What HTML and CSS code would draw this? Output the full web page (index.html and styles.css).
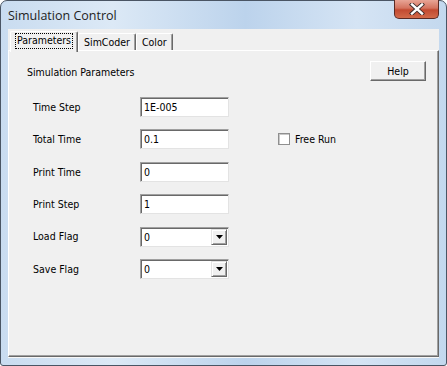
FILE: index.html
```html
<!DOCTYPE html>
<html lang="en">
<head>
  <meta charset="UTF-8">
  <title>Simulation Control</title>
  <link rel="stylesheet" href="styles.css">
</head>
<body>
  <div class="window">
    <!-- Title bar -->
    <div class="titlebar">
      <span class="title">Simulation Control</span>
      <div class="close">
        <svg width="16" height="12" viewBox="0 0 16 12">
          <path d="M3 1.5 L13 10.5 M13 1.5 L3 10.5" stroke="#3a2a2a" stroke-width="4.2" stroke-linecap="square"/>
          <path d="M3 1.5 L13 10.5 M13 1.5 L3 10.5" stroke="#ffffff" stroke-width="2.4" stroke-linecap="square"/>
        </svg>
      </div>
    </div>
    <!-- Client area -->
    <div class="client">
      <div class="tabs">
        <div class="tab active"><span class="focus">Parameters</span></div>
        <div class="tab">SimCoder</div>
        <div class="tab">Color</div>
      </div>
      <div class="panel">
        <div class="panel-head">
          <span>Simulation Parameters</span>
          <div class="button">Help</div>
        </div>
        <div class="form grid">
          <label>Time Step</label>
          <div class="edit">1E-005</div>
          <div></div>

          <label>Total Time</label>
          <div class="edit">0.1</div>
          <div class="check"><span class="box"></span>Free Run</div>

          <label>Print Time</label>
          <div class="edit">0</div>
          <div></div>

          <label>Print Step</label>
          <div class="edit">1</div>
          <div></div>

          <label>Load Flag</label>
          <div class="edit combo">0<span class="drop"><svg width="7" height="4" viewBox="0 0 7 4"><path d="M0 0 H7 L3.5 4 Z" fill="#000"/></svg></span></div>
          <div></div>

          <label>Save Flag</label>
          <div class="edit combo">0<span class="drop"><svg width="7" height="4" viewBox="0 0 7 4"><path d="M0 0 H7 L3.5 4 Z" fill="#000"/></svg></span></div>
          <div></div>
        </div>
      </div>
    </div>
  </div>
</body>
</html>
```
FILE: styles.css
```css
html {
  font: 10.5px/1.0 "DejaVu Sans Condensed", "DejaVu Sans", sans-serif;
}
body {
  margin: 0;
  padding: 0;
  background: #ffffff;
}
.window {
  width: 447px;
  height: 366px;
  box-sizing: border-box;
  border: 1px solid #4a5564;
  border-radius: 7px 7px 3px 3px;
  background: linear-gradient(90deg, #c9dcf0 0%, #dce9f6 25%, #bcd3ec 55%, #d5e4f4 80%, #c3d8ee 100%);
  display: flex;
  flex-direction: column;
}
.titlebar {
  height: 28px;
  display: flex;
  justify-content: space-between;
  align-items: flex-start;
  padding: 0 7px 0 7px;
}
.title {
  font: 12.5px "Open Sans", "Noto Sans", sans-serif;
  color: #1e1e1e;
  padding-top: 6px;
}
.close {
  width: 45px;
  height: 19px;
  margin-top: -1px;
  box-sizing: border-box;
  border: 1px solid #5a2a24;
  border-top: none;
  border-radius: 0 0 5px 5px;
  background: linear-gradient(180deg, #e8a596 0%, #d4735f 45%, #c24a31 55%, #d26a4a 100%);
  display: flex;
  justify-content: center;
  align-items: center;
}
.client {
  flex: 1;
  margin: 0 7px 7px 7px;
  background: #f0f0f0;
  display: flex;
  flex-direction: column;
  padding-top: 2px;
  border-bottom: 1px solid #f7f7f7;
}
.tabs {
  display: flex;
  align-items: flex-end;
  padding-left: 2px;
  height: 19px;
  position: relative;
  z-index: 1;
}
.tab {
  height: 17px;
  box-sizing: border-box;
  padding: 3px 5px 0 5px;
  border-left: 1px solid #ffffff;
  border-top: 1px solid #ffffff;
  border-right: 1px solid #696969;
  box-shadow: inset -1px 0 #a0a0a0;
  border-radius: 2px 2px 0 0;
  color: #000;
  background: #f0f0f0;
}
.tab.active {
  height: 21px;
  margin-bottom: -2px;
  padding: 2px 5px 0 5px;
}
.focus {
  display: inline-block;
  outline: 1px dotted #000;
  padding: 1px 1px 2px 1px;
}
.panel {
  flex: 1;
  border-top: 1px solid #ffffff;
  border-left: 1px solid #ffffff;
  border-right: 1px solid #696969;
  border-bottom: 1px solid #696969;
  box-shadow: inset -1px -1px #a0a0a0;
  padding: 10px 12px 0 18px;
}
.panel-head {
  display: flex;
  justify-content: space-between;
  align-items: flex-start;
}
.panel-head span {
  padding-top: 6px;
}
.button {
  width: 56px;
  height: 20px;
  box-sizing: border-box;
  border-top: 1px solid #ffffff;
  border-left: 1px solid #ffffff;
  border-right: 1px solid #696969;
  border-bottom: 1px solid #696969;
  box-shadow: inset -1px -1px #a0a0a0;
  display: flex;
  justify-content: center;
  align-items: center;
}
.grid {
  display: grid;
  grid-template-columns: 107px 89px auto;
  grid-auto-rows: 20px;
  row-gap: 12.4px;
  align-items: center;
}
.form {
  margin-top: 16px;
  padding-left: 6px;
}
.edit {
  height: 20px;
  box-sizing: border-box;
  background: #ffffff;
  border-top: 1px solid #a0a0a0;
  border-left: 1px solid #a0a0a0;
  border-right: 1px solid #e3e3e3;
  border-bottom: 1px solid #e3e3e3;
  box-shadow: inset 1px 1px #696969;
  padding: 4px 0 0 3px;
  position: relative;
}
.drop {
  position: absolute;
  right: 1px;
  top: 1px;
  width: 16px;
  height: 16px;
  box-sizing: border-box;
  background: #f0f0f0;
  border-top: 1px solid #e3e3e3;
  border-left: 1px solid #e3e3e3;
  border-right: 1px solid #696969;
  border-bottom: 1px solid #696969;
  box-shadow: inset 1px 1px #ffffff, inset -1px -1px #a0a0a0;
  display: flex;
  justify-content: center;
  align-items: center;
}
.check {
  display: flex;
  align-items: center;
  margin-left: 49px;
  gap: 5px;
}
.box {
  width: 12px;
  height: 12px;
  box-sizing: border-box;
  background: #ffffff;
  border: 1px solid #8f8f8f;
  box-shadow: inset 1px 1px #c8c8c8;
}
```
